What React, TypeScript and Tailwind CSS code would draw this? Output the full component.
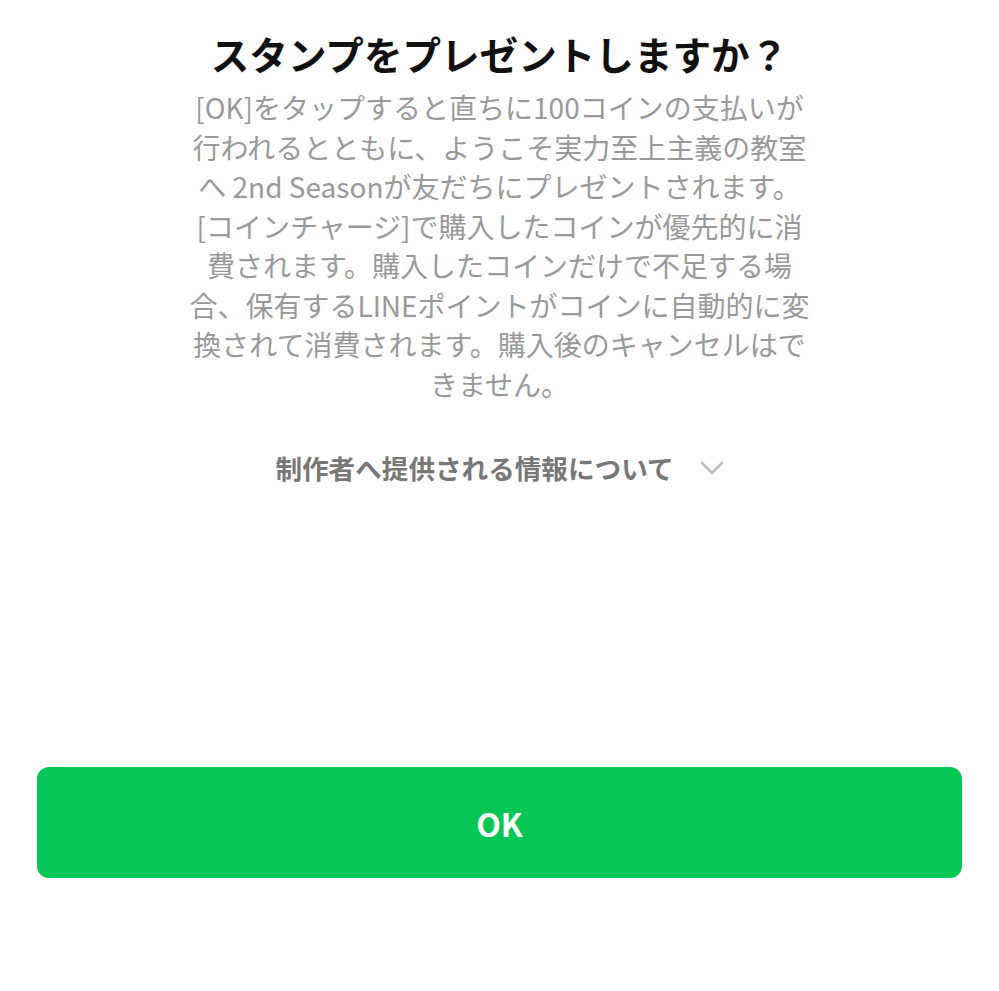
export default function App() {
  const lines = [
    "[OK]をタップすると直ちに100コインの支払いが",
    "行われるとともに、ようこそ実力至上主義の教室",
    "へ 2nd Seasonが友だちにプレゼントされます。",
    "[コインチャージ]で購入したコインが優先的に消",
    "費されます。購入したコインだけで不足する場",
    "合、保有するLINEポイントがコインに自動的に変",
    "換されて消費されます。購入後のキャンセルはで",
    "きません。",
  ];

  return (
    <div
      className="min-h-screen bg-white flex flex-col items-center px-[37px]"
      style={{ fontFamily: '"Noto Sans CJK JP", "Noto Sans", sans-serif' }}
    >
      <h1 className="mt-[30px] text-[38.6px] leading-[46px] font-bold text-[#111111] whitespace-nowrap">
        スタンプをプレゼントしますか？
      </h1>

      <div className="mt-[12px] text-[28px] leading-[39.5px] text-[#999999] text-center">
        {lines.map((l) => (
          <div key={l} className="whitespace-nowrap">
            {l}
          </div>
        ))}
      </div>

      <button className="mt-[46px] flex items-center gap-[26px] text-[26.6px] leading-[36px] font-bold text-[#777777]">
        <span>制作者へ提供される情報について</span>
        <svg width="24" height="16" viewBox="0 0 24 16" fill="none">
          <path d="M2 3l10 10L22 3" stroke="#bbbbbb" strokeWidth="2.6" strokeLinecap="round" strokeLinejoin="round" />
        </svg>
      </button>

      <button className="mt-[281px] w-full h-[111px] rounded-[12px] bg-[#06c755] text-white text-[32px] font-bold flex items-center justify-center">
        OK
      </button>
    </div>
  );
}
